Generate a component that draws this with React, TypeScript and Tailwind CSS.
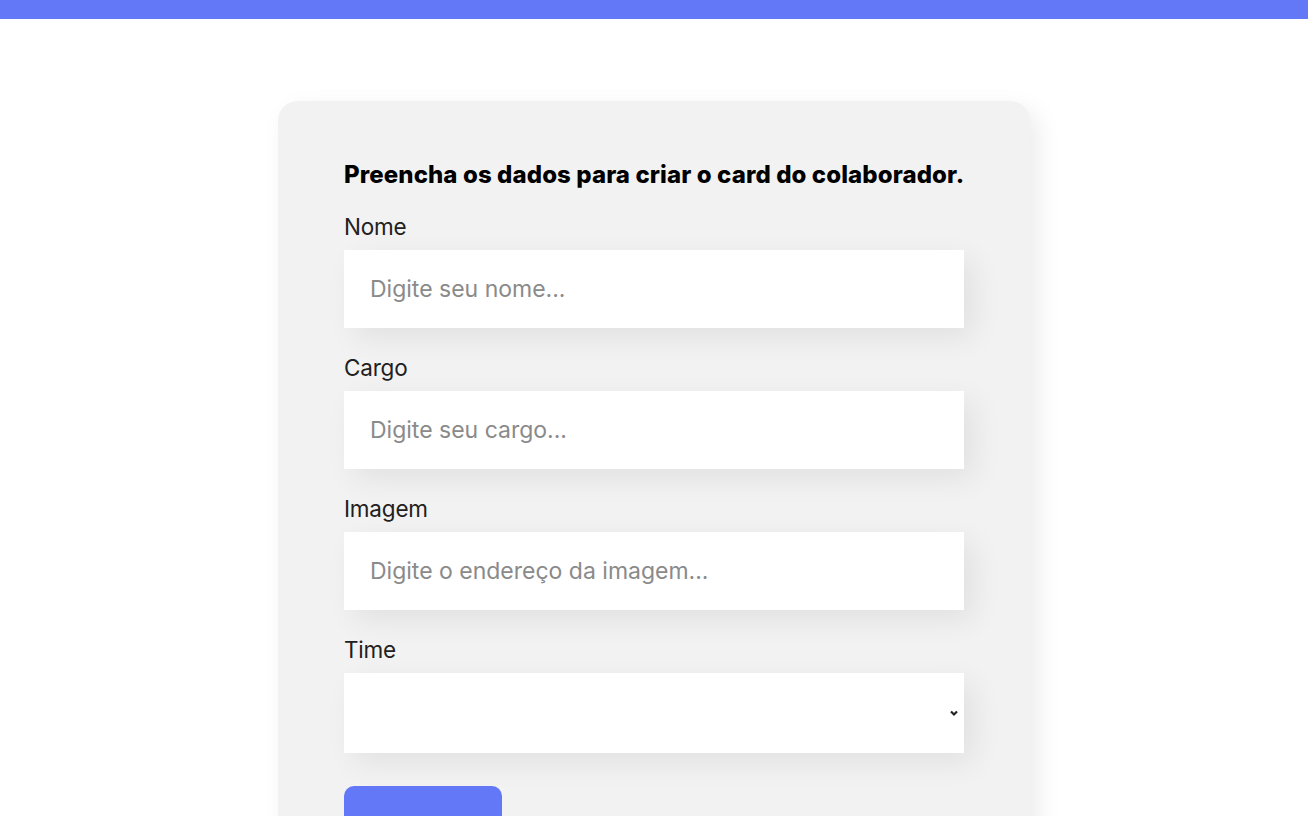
const fields = [
  { label: 'Nome', placeholder: 'Digite seu nome...' },
  { label: 'Cargo', placeholder: 'Digite seu cargo...' },
  { label: 'Imagem', placeholder: 'Digite o endereço da imagem...' },
]

export default function App() {
  return (
    <div className="min-h-screen bg-white font-['Inter',sans-serif] text-[#212121]">
      <header className="h-[19px] bg-[#6278f7]" />

      <section className="flex justify-center pt-[82px]">
        <form className="w-[752px] rounded-[20px] bg-[#f2f2f2] px-[66px] pt-[62px] pb-[60px] shadow-[8px_8px_24px_rgba(0,0,0,0.08)]">
          <h2 className="whitespace-nowrap text-[24px] font-extrabold leading-[24px] tracking-[0.1px] text-black">
            Preencha os dados para criar o card do colaborador.
          </h2>

          {fields.map((field) => (
            <div key={field.label} className="mt-[28px]">
              <label className="block text-[22.5px] leading-[24px] tracking-[-0.2px]">
                {field.label}
              </label>
              <input
                type="text"
                placeholder={field.placeholder}
                className="mt-[11px] block h-[78px] w-full bg-white px-[26px] text-[23px] outline-none shadow-[10px_10px_30px_rgba(0,0,0,0.07)] placeholder:text-[#8a8a8a]"
              />
            </div>
          ))}

          <div className="mt-[28px]">
            <label className="block text-[22.5px] leading-[24px] tracking-[-0.2px]">Time</label>
            <div className="relative mt-[11px]">
              <select className="block h-[80px] w-full appearance-none bg-white px-[26px] text-[23px] outline-none shadow-[10px_10px_30px_rgba(0,0,0,0.07)]">
                <option value=""></option>
              </select>
              <svg
                className="pointer-events-none absolute right-[5px] top-[36px] h-[8px] w-[10px]"
                viewBox="0 0 10 8"
              >
                <path d="M2 2.5 L5 5.5 L8 2.5" fill="none" stroke="#222" strokeWidth="2.2" />
              </svg>
            </div>
          </div>

          {/* botão fica abaixo da dobra, só o topo aparece */}
          <button
            type="submit"
            aria-label="Criar card"
            className="mt-[33px] block h-[88px] w-[158px] rounded-[10px] bg-[#6278f7]"
          />
        </form>
      </section>
    </div>
  )
}
